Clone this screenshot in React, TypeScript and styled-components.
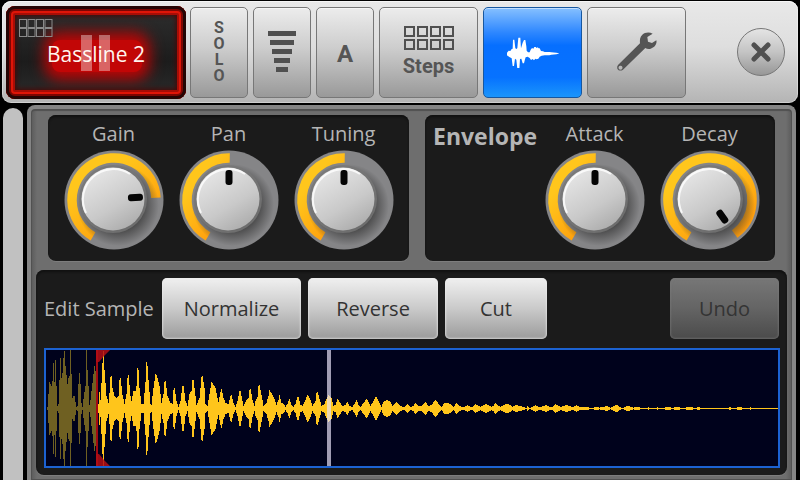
import React, { useId, useState } from "react";
import styled, { createGlobalStyle, css } from "styled-components";

const GlobalStyle = createGlobalStyle`
  * { box-sizing: border-box; }
  body {
    margin: 0;
    background: #000;
    font-family: "Open Sans", "Noto Sans", sans-serif;
    font-size: 20px;
    line-height: 24px;
  }
  button { font: inherit; margin: 0; padding: 0; cursor: pointer; }
`;

const Page = styled.div`
  display: flex;
  flex-direction: column;
  min-height: 100vh;
  padding: 1px 2px 0;
`;

const Toolbar = styled.header`
  display: flex;
  align-items: center;
  gap: 5px;
  height: 102px;
  padding: 0 13px 0 4px;
  border-radius: 9px;
  background: linear-gradient(#e8e8e8, #dedede 45%, #b4b4b4);
  box-shadow: inset 0 1px 0 #f6f6f6, inset 0 0 0 1px rgba(255, 255, 255, 0.35);
`;

const MachineButton = styled.button`
  display: grid;
  place-items: center;
  position: relative;
  width: 180px;
  height: 93px;
  margin-right: -1px;
  border: 0;
  border-radius: 9px;
  color: #fff4ee;
  font-size: 21px;
  background: linear-gradient(#2f2f2f, #1c1c1c 60%, #2d2d2d);
  box-shadow: inset 0 0 0 3px #250504, inset 0 0 0 5px #7c0602, inset 0 0 0 7px #df1508,
    inset 0 0 0 9px #a70d06, inset 0 0 5px 10px #4a0705;
`;

const MachineGlow = styled.span`
  position: absolute;
  inset: 34px 44px 27px 46px;
  border-radius: 8px;
  background: #c20606;
  box-shadow: 0 0 14px 8px #b80606;
`;

const MachineGrid = styled.svg`
  position: absolute;
  left: 13px;
  top: 13px;
`;

const PauseMark = styled.svg`
  position: absolute;
  left: 75px;
  top: 29px;
`;

const MachineName = styled.span`
  position: relative;
  padding-top: 4px;
`;

const ToolButton = styled.button<{ $wide?: boolean; $active?: boolean }>`
  display: flex;
  flex-direction: column;
  align-items: center;
  justify-content: center;
  gap: 3px;
  width: ${(p) => (p.$wide ? 99 : 58)}px;
  height: 91px;
  border: 1px solid #777;
  border-radius: 5px;
  color: #555;
  font-family: Roboto, sans-serif;
  font-weight: 700;
  background: linear-gradient(#ececec, #cdcdcd 45%, #999);
  box-shadow: inset 0 1px 0 rgba(255, 255, 255, 0.5);
  ${(p) =>
    p.$active &&
    css`
      border-color: #17579f;
      background: linear-gradient(#86c0ff, #2c86ff 28%, #066fff 42%, #0672ff 78%, #1b95fb);
    `}
`;

const VerticalText = styled.span`
  width: 12px;
  font-size: 16px;
  line-height: 16px;
  text-align: center;
  overflow-wrap: anywhere;
`;

const Letter = styled.span`
  font-size: 24px;
  padding-top: 3px;
`;

const CloseButton = styled.button`
  display: grid;
  place-items: center;
  width: 48px;
  height: 48px;
  margin-left: auto;
  border: 1px solid #777;
  border-radius: 50%;
  background: linear-gradient(#e4e4e4, #c4c4c4 50%, #979797);
`;

const Body = styled.div`
  display: flex;
  flex: 1;
  gap: 4px;
  padding: 2px 2px 0 1px;
`;

const ScrollTrack = styled.div`
  flex: none;
  width: 20px;
  margin-top: 3px;
  border-radius: 10px 10px 0 0;
  background: #c1c1c1;
`;

const Frame = styled.main`
  flex: 1;
  min-width: 0;
  padding: 6px 5px 5px 6px;
  border: 4px solid #858585;
  border-width: 4px 4px 0;
  border-radius: 8px 8px 0 0;
  background: linear-gradient(90deg, #5a5a5a, #6e6e6e 6px, #6e6e6e calc(100% - 6px), #5a5a5a);
  box-shadow: inset 0 2px 1px #505050, inset 0 0 0 1px #515151;
`;

const TopRow = styled.div`
  display: flex;
  gap: 16px;
  padding: 0 12px 0 11px;
`;

const Panel = styled.section`
  border-radius: 8px;
  background: #1b1b1b;
  box-shadow: inset 0 2px 2px #111, 0 1px 0 #7d7d7d;
`;

const KnobPanel = styled(Panel)<{ $grow: number }>`
  display: flex;
  flex: ${(p) => p.$grow} 1 0;
  height: 146px;
  padding: 8px 8px 0;
  color: #b5b5b5;
`;

const PanelTitle = styled.h2`
  flex: 1;
  margin: 1px 0 0;
  font-size: 23px;
  line-height: 24px;
  font-weight: 700;
`;

const KnobLabel = styled.label`
  display: flex;
  flex-direction: column;
  align-items: center;
  gap: 4px;
  position: relative;
  width: 115px;
  margin-top: -1px;
`;

const KnobInput = styled.input`
  position: absolute;
  inset: 28px 8px 10px;
  width: 99px;
  height: 99px;
  margin: 0;
  opacity: 0;
  cursor: pointer;
`;

const SamplePanel = styled(Panel)`
  margin: 9px 0 0 -1px;
  padding: 8px 7px 7px 8px;
`;

const EditRow = styled.div`
  display: flex;
  align-items: center;
  gap: 7px;
  margin: 0 1px 9px 0;
  color: #b5b5b5;
`;

const EditTitle = styled.span`
  width: 111px;
  white-space: nowrap;
`;

const EditButton = styled.button<{ $width: number }>`
  width: ${(p) => p.$width}px;
  height: 61px;
  border: 0;
  border-radius: 5px;
  color: #333;
  background: linear-gradient(#f0f0f0, #cacaca 50%, #9b9b9b);
  box-shadow: inset 0 0 2px 1px rgba(235, 235, 235, 0.65);
  &:disabled {
    margin-left: auto;
    color: #343434;
    background: linear-gradient(#777, #646464 50%, #4b4b4b);
    box-shadow: inset 0 0 2px 1px rgba(120, 120, 120, 0.6);
    cursor: default;
  }
`;

const WaveBox = styled.div`
  height: 120px;
  border: 2px solid #1c62d2;
  background: #00021c;
`;

const WaveSvg = styled.svg`
  display: block;
  width: 100%;
  height: 100%;
`;

const polar = (deg: number, r: number) => {
  const a = (deg * Math.PI) / 180;
  return `${50 + r * Math.sin(a)} ${50 - r * Math.cos(a)}`;
};

const Knob = ({ label, initial }: { label: string; initial: number }) => {
  const [angle, setAngle] = useState(initial);
  const id = useId();
  const end = Math.min(angle + 1, 144);
  return (
    <KnobLabel>
      <span>{label}</span>
      <svg width="100" height="100" viewBox="0 0 100 100" aria-hidden="true">
        <defs>
          <linearGradient id={id + "arc"} x1="0" y1="0" x2="0.7" y2="1">
            <stop offset="0.3" stopColor="#ffc61c" />
            <stop offset="1" stopColor="#ff9d0c" />
          </linearGradient>
          <linearGradient id={id + "face"} x1="0.2" y1="0" x2="0.8" y2="1">
            <stop offset="0" stopColor="#e8e8e8" />
            <stop offset="0.6" stopColor="#c9c9c9" />
            <stop offset="1" stopColor="#a9a9a9" />
          </linearGradient>
          <radialGradient id={id + "shade"}>
            <stop offset="0.6" stopColor="#333" stopOpacity="0.75" />
            <stop offset="1" stopColor="#333" stopOpacity="0" />
          </radialGradient>
        </defs>
        <circle cx="50" cy="50" r="49.5" fill="#858587" />
        <path
          d={`M${polar(-150, 42)}A42 42 0 ${end > 30 ? 1 : 0} 1 ${polar(end, 42)}`}
          fill="none"
          stroke={`url(#${id}arc)`}
          strokeWidth="9.5"
        />
        <circle cx="54" cy="55" r="41" fill={`url(#${id}shade)`} />
        <circle cx="49" cy="49" r="34" fill="#777" fillOpacity="0.8" />
        <circle cx="49" cy="49" r="31.5" fill={`url(#${id}face)`} />
        <path d="M22 63A30.5 30.5 0 0 1 66 24" fill="none" stroke="#fff" strokeWidth="2" strokeOpacity="0.8" />
        <rect x="46.5" y="20" width="7" height="15" rx="3" fill="#050505" transform={`rotate(${angle} 50 49)`} />
      </svg>
      <KnobInput
        type="range"
        min={-150}
        max={145}
        value={angle}
        onChange={(e) => setAngle(Number(e.target.value))}
      />
    </KnobLabel>
  );
};

/* Flat lists of position, amplitude pairs, positions in pixels from the left of the sample. */
const HEAD = [
  1, 1, 2, 14, 3, 26, 5, 22, 6, 27, 7, 45, 8, 26, 9, 48, 10, 22, 11, 2, 12, 4, 13, 28, 14, 50, 15, 30, 16, 35, 17, 50,
  18, 57, 19, 42, 20, 33, 21, 24, 22, 30, 23, 32, 24, 59, 25, 34, 26, 10, 27, 12, 28, 12, 29, 6, 30, 1, 31, 2, 32, 24,
  33, 35, 34, 24, 35, 5, 36, 1, 38, 16, 39, 22, 40, 59, 41, 38, 42, 22, 43, 3, 44, 8, 46, 25, 48, 42, 49, 37, 50, 28,
  51, 5,
];
const TAIL = [
  52, 4, 53, 16, 54, 8, 55, 25, 56, 45, 57, 57, 58, 38, 59, 25, 60, 12, 62, 5, 63, 15, 64, 31, 65, 32, 66, 20, 68, 12,
  70, 10, 72, 12, 73, 28, 74, 30, 76, 13, 78, 4, 80, 14, 81, 30, 82, 33, 84, 12, 85, 7, 87, 17, 89, 17, 90, 22, 91, 40,
  92, 38, 93, 20, 95, 4, 97, 4, 99, 26, 100, 46, 101, 42, 102, 28, 104, 4, 105, 3, 107, 20, 109, 34, 110, 33, 111, 30,
  113, 22, 115, 5, 117, 14, 118, 26, 119, 27, 121, 12, 124, 5, 126, 4, 127, 18, 128, 20, 130, 7, 132, 1, 134, 7, 136,
  22, 137, 22, 139, 7, 141, 2, 143, 14, 145, 17, 146, 28, 147, 28, 149, 12, 150, 3, 153, 10, 154, 20, 155, 31, 156, 32,
  158, 20, 159, 4, 161, 2, 163, 14, 165, 26, 166, 25, 169, 20, 171, 10, 172, 6, 174, 16, 175, 19, 177, 10, 179, 5,
  182, 4, 184, 12, 185, 13, 187, 5, 189, 1, 191, 7, 193, 17, 194, 17, 196, 7, 197, 2, 200, 8, 202, 10, 203, 18, 204,
  19, 206, 8, 208, 2, 209, 7, 211, 11, 212, 22, 213, 23, 215, 13, 217, 2, 220, 5, 222, 12, 223, 18, 226, 13, 228, 9,
  230, 3, 232, 8, 233, 13, 235, 5, 237, 4, 239, 1, 241, 4, 243, 9, 245, 3, 247, 1, 249, 4, 251, 11, 252, 11, 254, 3,
  256, 2, 259, 8, 261, 13, 262, 12, 264, 8, 266, 2, 269, 7, 270, 15, 271, 16, 273, 9, 275, 2, 278, 4, 280, 9, 282, 13,
  285, 10, 287, 2, 289, 3, 291, 9, 293, 6, 296, 2, 299, 3, 301, 6, 303, 2, 306, 1, 308, 4, 310, 8, 312, 3, 314, 1, 317,
  5, 320, 9, 322, 6, 324, 2, 326, 5, 329, 11, 330, 11, 333, 5, 335, 1, 337, 6, 341, 8, 344, 6, 346, 2, 350, 6, 353, 3,
  356, 1, 358, 1, 361, 4, 364, 1, 367, 2, 369, 5, 372, 2, 375, 2, 379, 6, 382, 2, 385, 3, 389, 8, 393, 3, 395, 1, 398,
  5, 401, 5, 404, 4, 407, 1, 410, 5, 412, 3, 415, 1, 418, 1, 421, 3, 424, 1, 426, 1, 429, 4, 432, 2, 434, 1, 436, 2,
  440, 4, 443, 2, 445, 1, 447, 2, 449, 5, 451, 3, 454, 1, 457, 3, 461, 4, 464, 3, 466, 1, 470, 3, 473, 2, 477, 1, 480,
  0, 481, 2, 483, 0, 486, 1, 489, 3, 492, 1, 495, 1, 497, 2, 500, 3, 503, 1, 506, 1, 509, 4, 512, 2, 515, 1, 517, 2,
  520, 3, 523, 2, 525, 1, 527, 1, 530, 3, 533, 1, 535, 1, 537, 1, 539, 1, 541, 1, 543, 0, 547, 0, 548, 1, 552, 1, 553,
  0, 555, 1, 558, 1, 560, 2, 562, 1, 564, 0, 567, 2, 571, 3, 573, 1, 576, 0, 579, 1, 581, 2, 585, 1, 587, 0, 589, 1,
  593, 1, 594, 0, 601, 0, 602, 1, 603, 0, 610, 0, 611, 1, 612, 0, 618, 0, 619, 1, 624, 1, 625, 0, 627, 0, 628, 1, 633,
  1, 634, 0, 639, 0, 640, 1, 646, 1, 647, 0, 650, 0, 651, 1, 653, 1, 654, 0, 682, 0, 683, 1, 684, 1, 685, 0, 690, 0,
  691, 1, 695, 1, 696, 0, 703, 0, 704, 1, 705, 0, 732, 0,
];

const wavePath = (data: number[]) => {
  let d = "";
  for (let i = 0; i + 3 < data.length; i += 2) {
    const [x0, a0, x1, a1] = data.slice(i, i + 4);
    for (let x = x0; x < x1; x++) {
      const a = Math.round(a0 + ((a1 - a0) * (x - x0)) / (x1 - x0));
      d += `M${x} ${58 - a}h1v${a * 2 + 1}h-1z`;
    }
  }
  return d;
};

const CELLS = [0, 1, 2, 3, 4, 5, 6, 7];

const Waveform = () => (
  <WaveBox>
    <WaveSvg viewBox="0 0 732 116" preserveAspectRatio="none" shapeRendering="crispEdges" role="img" aria-label="Sample waveform">
      <path d={wavePath(HEAD)} fill="#6f6022" />
      <path d={wavePath(TAIL)} fill="#ffc51b" />
      <path d="M50 0h2v116h-2z" fill="#a40a12" />
      <path d="M50 0h14l-6 6-5 6h-3zM50 116h14l-6-6-5-6h-3z" fill="#b50e15" fillOpacity="0.85" shapeRendering="auto" />
      <rect x="281" y="0" width="4" height="116" fill="#e6dff5" fillOpacity="0.7" />
    </WaveSvg>
  </WaveBox>
);

export default function App() {
  return (
    <Page>
      <GlobalStyle />
      <Toolbar>
        <MachineButton>
          <MachineGlow />
          <MachineGrid width="34" height="19" aria-hidden="true">
            {CELLS.map((i) => (
              <rect key={i} x={0.5 + (i % 4) * 8.5} y={0.5 + Math.floor(i / 4) * 9} width="7" height="8" fill="none" stroke="#8a8a8a" />
            ))}
          </MachineGrid>
          <MachineName>Bassline 2</MachineName>
          <PauseMark width="29" height="36" aria-hidden="true">
            <path d="M0 0h11v36H0zM18 0h11v36H18z" fill="#fff" fillOpacity="0.38" />
          </PauseMark>
        </MachineButton>
        <ToolButton>
          <VerticalText>SOLO</VerticalText>
        </ToolButton>
        <ToolButton aria-label="Levels">
          <svg width="28" height="42" aria-hidden="true">
            <path d="M0 0h28v5H0zM2 9h24v5H2zM4 18h20v5H4zM6 27h16v5H6zM8 36h12v5H8z" fill="#505050" />
          </svg>
        </ToolButton>
        <ToolButton>
          <Letter>A</Letter>
        </ToolButton>
        <ToolButton $wide>
          <svg width="50" height="25" aria-hidden="true">
            {CELLS.map((i) => (
              <rect key={i} x={1 + (i % 4) * 13} y={1 + Math.floor(i / 4) * 13} width="9" height="9" fill="none" stroke="#505050" strokeWidth="2" />
            ))}
          </svg>
          Steps
        </ToolButton>
        <ToolButton $wide $active aria-label="Sample">
          <svg width="52" height="32" viewBox="95 110 156 96" aria-hidden="true">
            <path
              d="M95 160l5-6 5 1 4-6 3-1 1-27h4l3 26 4 2 2-3 3-31h6l2 32 5-17 4-8h4l3 19 1 13 4 5h5l3-8 4-5 4 2 3-5h4l3 3 3-2 3 3h3l4 8 6 1 5 2h14l6 1 15 1 9 2-9 3-15 1-6 2h-14l-9 1-6 3-4 6-5 2-4-2-4 5-4-4-5 3-4-6-6-4-6 2-2 6-3 12h-4l-4-14-4 1-2 30h-6l-3-28-4-3-3 22h-4l-3-23-7-4-5-4-5-2z"
              fill="#fff"
            />
          </svg>
        </ToolButton>
        <ToolButton $wide aria-label="Settings">
          <svg width="42" height="42" viewBox="425 92 126 126" aria-hidden="true">
            <path
              d="M431 194L497 129C496 119 497 109 504 103C511 96 525 94 535 100L519 110L521 124L533 128L546 120C549 130 541 142 529 145Q520 147 513 143L446 208C440 213 432 211 429 205Q427 199 431 194ZM438 196a6 6 0 1 0 1 0z"
              fill="#555"
              fillRule="evenodd"
            />
          </svg>
        </ToolButton>
        <CloseButton aria-label="Close">
          <svg width="22" height="22" viewBox="0 0 22 22" aria-hidden="true">
            <path d="M4 4l14 14M18 4L4 18" stroke="#505050" strokeWidth="5" strokeLinecap="round" />
          </svg>
        </CloseButton>
      </Toolbar>
      <Body>
        <ScrollTrack />
        <Frame>
          <TopRow>
            <KnobPanel $grow={360}>
              <Knob label="Gain" initial={86} />
              <Knob label="Pan" initial={0} />
              <Knob label="Tuning" initial={0} />
            </KnobPanel>
            <KnobPanel $grow={351}>
              <PanelTitle>Envelope</PanelTitle>
              <Knob label="Attack" initial={0} />
              <Knob label="Decay" initial={145} />
            </KnobPanel>
          </TopRow>
          <SamplePanel>
            <EditRow>
              <EditTitle>Edit Sample</EditTitle>
              <EditButton $width={139}>Normalize</EditButton>
              <EditButton $width={130}>Reverse</EditButton>
              <EditButton $width={102}>Cut</EditButton>
              <EditButton $width={109} disabled>
                Undo
              </EditButton>
            </EditRow>
            <Waveform />
          </SamplePanel>
        </Frame>
      </Body>
    </Page>
  );
}
